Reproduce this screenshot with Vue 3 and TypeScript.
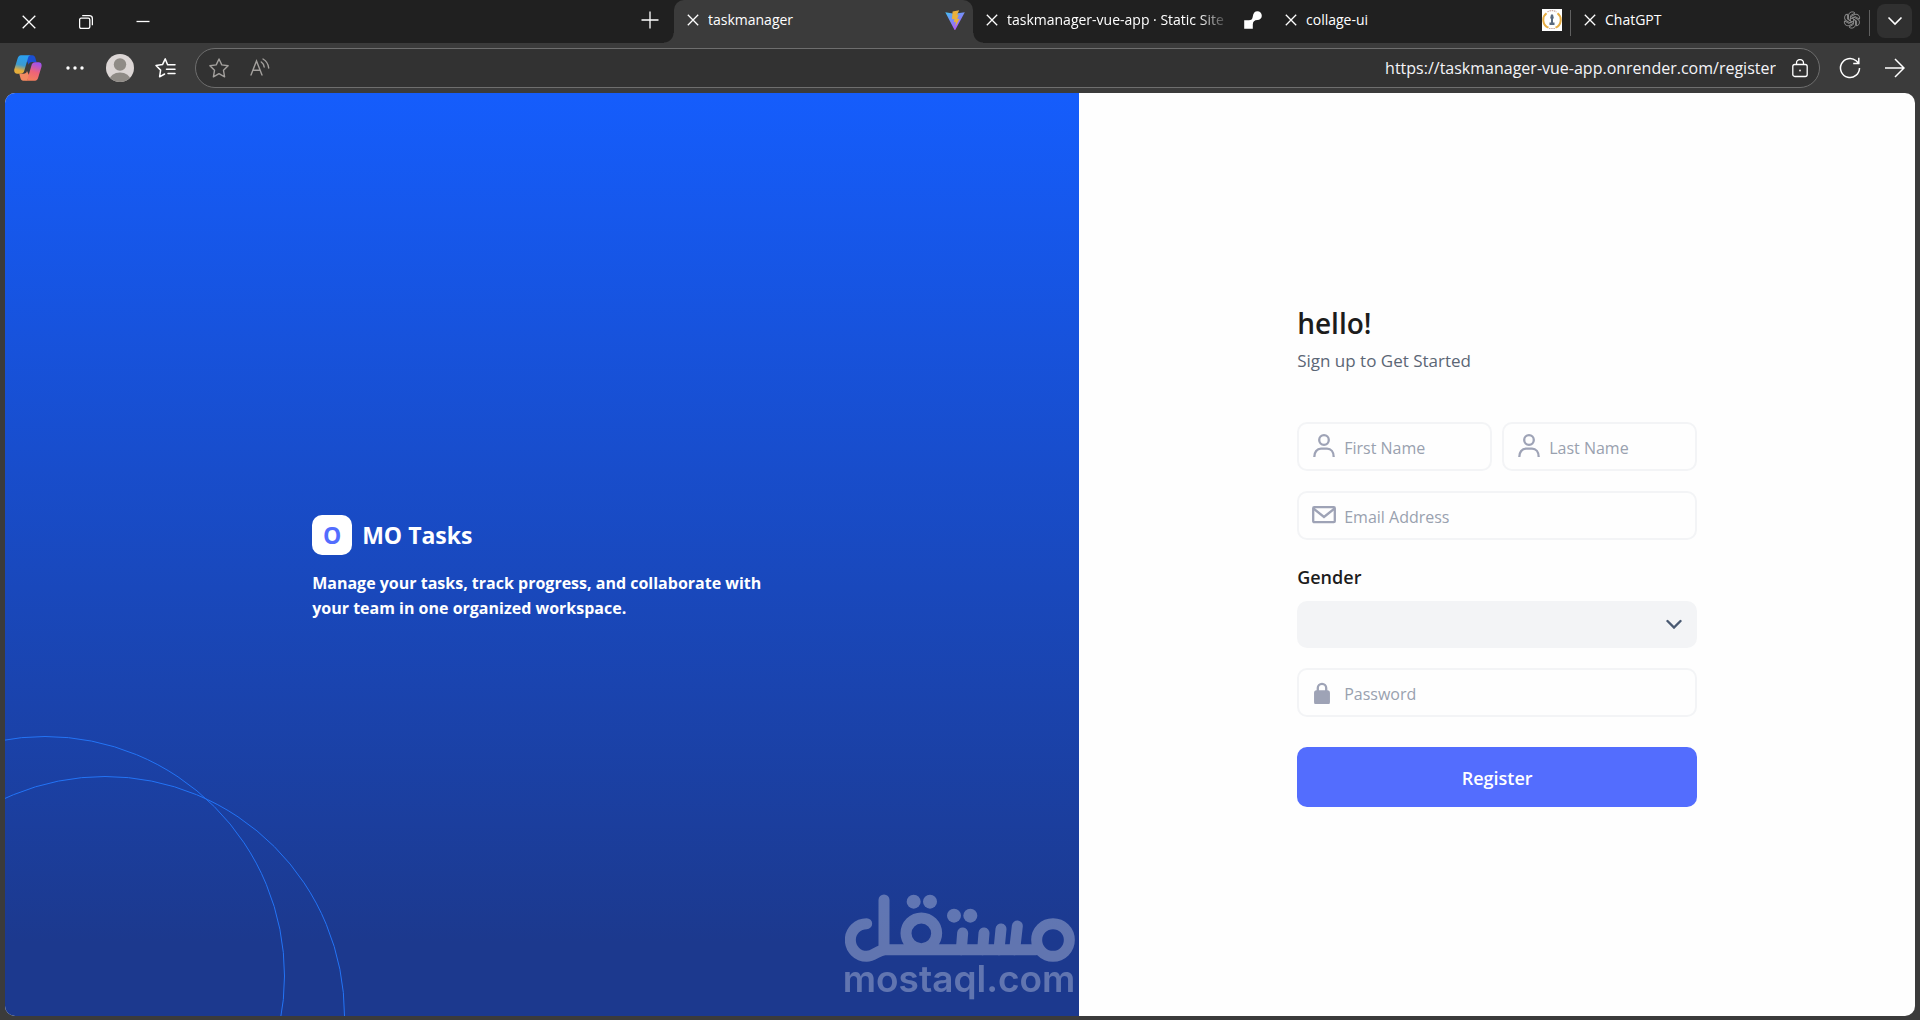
<script setup lang="ts">
import { ref } from 'vue'

interface Tab {
  title: string
  icon: 'vite' | 'render' | 'college' | 'openai'
  active?: boolean
}

const tabs: Tab[] = [
  { title: 'taskmanager', icon: 'vite', active: true },
  { title: 'taskmanager-vue-app · Static Site', icon: 'render' },
  { title: 'collage-ui', icon: 'college' },
  { title: 'ChatGPT', icon: 'openai' },
]

const petals = [0, 60, 120, 180, 240, 300]

const firstName = ref('')
const lastName = ref('')
const email = ref('')
const gender = ref('')
const password = ref('')
</script>

<template>
  <div class="browser">
    <header class="tabbar">
      <div class="window-controls">
        <button type="button" aria-label="Close window">
          <svg width="14" height="14" viewBox="0 0 14 14" class="line"><path d="M.7.7l12.6 12.6M13.3.7L.7 13.3" /></svg>
        </button>
        <button type="button" aria-label="Restore window">
          <svg width="14" height="14" viewBox="0 0 14 14" class="line">
            <rect x=".6" y="3.2" width="10.2" height="10.2" rx="1.6" />
            <path d="M3.2.7h7.2a3 3 0 0 1 3 3v6.600" />
          </svg>
        </button>
        <button type="button" aria-label="Minimize window">
          <svg width="14" height="14" viewBox="0 0 14 14" class="line"><path d="M.5 6.500h13" /></svg>
        </button>
      </div>
      <button type="button" class="new-tab" aria-label="New tab">
        <svg width="18" height="18" viewBox="0 0 18 18" class="line"><path d="M9 .5v17M.5 9h17" /></svg>
      </button>
      <nav class="tabs">
        <div v-for="tab in tabs" :key="tab.title" class="tab" :class="[tab.icon, { active: tab.active }]">
          <button type="button" class="tab-close" :aria-label="'Close ' + tab.title">
            <svg width="12" height="12" viewBox="0 0 12 12" class="line"><path d="M.8.8l10.400 10.400M11.200.8L.8 11.200" /></svg>
          </button>
          <span class="tab-title">{{ tab.title }}</span>
          <svg v-if="tab.icon === 'vite'" width="20" height="20" viewBox="0 0 20 20">
            <defs>
              <linearGradient id="vite-a" x1="0" y1="0" x2=".6" y2="1">
                <stop offset="0" stop-color="#41c0f5" />
                <stop offset="1" stop-color="#b455fb" />
              </linearGradient>
            </defs>
            <path d="M.3 2.200l9.100 1.600 10.400-1.600-9.300 17.200a.7.7 0 0 1-1.200 0z" fill="url(#vite-a)" />
            <path d="M14.200.2L7.600 1.500l-.6 7.800 2.400-.4-.6 3.400 2-.5-.4 4.700 4.200-7.800-2.300.4L13.600 4.700l-1.600.3z" fill="#e9b13b" />
          </svg>
          <svg v-else-if="tab.icon === 'render'" width="18" height="18" viewBox="0 0 18 18" fill="#fff">
            <path d="M.2 9.200h4.600c2.600 0 3.600-1.200 4-3.800C9.200 2.200 10.900.3 13.400.3a4.400 4.400 0 0 1 0 8.800c-2.900 0-4.600 1.700-4.600 4.400v4.200H.2z" />
          </svg>
          <svg v-else-if="tab.icon === 'college'" width="20" height="22" viewBox="0 0 20 22">
            <rect width="20" height="22" fill="#fff" />
            <path d="M4.500 4.200a8.500 8.500 0 0 0 2 14.500M15.500 4.200a8.500 8.500 0 0 1-2 14.500" fill="none" stroke="#e6ad45" stroke-width="2" />
            <path d="M5.500 3a8 8 0 0 1 9 0M7 19.500h6" fill="none" stroke="#c9a9a0" stroke-width="1.200" stroke-dasharray="1.500 .7" />
            <path d="M9 5.500h2l.8 3.500-.8 1v3.500h1.500v2.500h-5v-2.500H9V10l-.8-1z" fill="#59697e" />
          </svg>
          <svg v-else width="18" height="18" viewBox="-9 -9 18 18" fill="none" stroke="#858585" stroke-width="1">
            <path
              v-for="angle in petals"
              :key="angle"
              :transform="`rotate(${angle})`"
              d="M-3.500-5A3.800 3.800 0 0 1 3-7M-3.500-5V-.2L0 2M3-7L-1.300-4.500V-.8"
              stroke-linejoin="round"
            />
          </svg>
        </div>
      </nav>
      <button type="button" class="tab-menu" aria-label="Tab actions">
        <svg width="16" height="10" viewBox="0 0 16 10" class="line"><path d="M1.500 1.500L8 8l6.500-6.500" stroke-width="1.600" /></svg>
      </button>
    </header>

    <div class="toolbar">
      <button type="button" class="copilot" aria-label="Copilot">
        <svg width="28" height="26" viewBox="0 0 28 26">
          <defs>
            <linearGradient id="cp-left" x1=".4" y1="0" x2=".2" y2="1">
              <stop offset="0" stop-color="#2aa0f2" />
              <stop offset=".5" stop-color="#3b9bd0" />
              <stop offset=".8" stop-color="#e5ad3b" />
            </linearGradient>
            <linearGradient id="cp-right" x1=".6" y1="0" x2=".3" y2="1">
              <stop offset="0" stop-color="#a052ee" />
              <stop offset=".5" stop-color="#ef6378" />
              <stop offset="1" stop-color="#f3805a" />
            </linearGradient>
          </defs>
          <path d="M15 .3h3.500c1.500 0 2.300 1 2.800 2.500l1.200 4.200h-4.300c-2 0-3 1-3.500 2.800L12 4z" fill="#1b4fd2" />
          <path d="M7 .3h10c-1.700 0-2.500 1-3 2.700L10.500 15c-.7 2.500-1.500 3.700-4 3.700H3.300C.7 18.700-.3 16.700.4 14L3.500 3.700C4.200 1.500 5.200.3 7 .3z" fill="url(#cp-left)" />
          <path d="M12.500 25.700H9.200c-1.500 0-2.200-1-2.700-2.500l-1.200-4.500h4.200c2 0 3-1 3.500-2.800l2.700 5.600z" fill="#f28a62" />
          <path d="M21 25.700H10.800c1.700 0 2.500-1 3-2.700L17.300 11c.7-2.500 1.500-3.700 4-3.700h3.200c2.600 0 3.600 2 2.900 4.700l-3.100 10.300c-.6 2.200-1.600 3.400-3.300 3.400z" fill="url(#cp-right)" />
        </svg>
      </button>
      <button type="button" class="more" aria-label="Settings and more">
        <svg width="18" height="4" viewBox="0 0 18 4" fill="#fff"><circle cx="2" cy="2" r="1.700" /><circle cx="9" cy="2" r="1.700" /><circle cx="16" cy="2" r="1.700" /></svg>
      </button>
      <button type="button" class="profile" aria-label="Profile">
        <svg width="28" height="28" viewBox="0 0 28 28">
          <defs><clipPath id="avatar-clip"><circle cx="14" cy="14" r="14" /></clipPath></defs>
          <g clip-path="url(#avatar-clip)">
            <rect width="28" height="28" fill="#dcd6d5" />
            <circle cx="14" cy="10.500" r="6.200" fill="#8f8b86" />
            <ellipse cx="14" cy="26" rx="10.500" ry="7.600" fill="#8f8b86" />
          </g>
        </svg>
      </button>
      <button type="button" class="favorites" aria-label="Favorites">
        <svg width="22" height="20" viewBox="0 0 22 20" class="line" stroke-linejoin="round" stroke-linecap="round">
          <path d="M12.500 6.500L10.200.9 7.500 6.600 1 7.500l4.600 4.600-1 6.700 5-2.800M12.500 6.800H20M11.500 11.200H20M13 15.500H20" stroke-width="1.500" />
        </svg>
      </button>
      <div class="address">
        <div class="address-tools">
          <button type="button" aria-label="Add to favorites">
            <svg width="20" height="20" viewBox="0 0 20 20" class="line dim" stroke-linejoin="round">
              <path d="M10 1l2.800 5.900 6.300.9-4.600 4.500 1.100 6.500L10 15.700l-5.600 3.100 1.100-6.500L.9 7.800l6.300-.9z" stroke-width="1.400" />
            </svg>
          </button>
          <button type="button" aria-label="Read aloud">
            <svg width="20" height="20" viewBox="0 0 20 20" class="line dim" stroke-linecap="round">
              <path d="M1 17L6.500 3 12 17M3 12.200h7M11.300 4c1.700 1.200 2.700 2.900 2.900 5M13 1c3.300 1.900 5.300 5 5.700 9" stroke-width="1.400" />
            </svg>
          </button>
        </div>
        <input class="url" type="text" aria-label="Address" value="https://taskmanager-vue-app.onrender.com/register" />
        <button type="button" aria-label="Site information">
          <svg width="16" height="19" viewBox="0 0 16 19" class="line">
            <rect x=".8" y="5.500" width="14.400" height="12" rx="2" stroke-width="1.300" />
            <path d="M4.500 5.500V4a3.500 3.500 0 0 1 7 0v1.500" stroke-width="1.300" />
            <circle cx="8" cy="11.500" r="1" fill="#e6e0e0" stroke="none" />
          </svg>
        </button>
      </div>
      <button type="button" class="refresh" aria-label="Refresh">
        <svg width="22" height="22" viewBox="0 0 22 22" class="line"><path d="M20.500 11a9.500 9.500 0 1 1-3.300-7.200l2.300 2.300M19.800.8v5.600h-5.600" stroke-width="1.500" /></svg>
      </button>
      <button type="button" class="forward" aria-label="Forward">
        <svg width="20" height="20" viewBox="0 0 20 20" class="line"><path d="M0 10h19M10 1l9 9-9 9" stroke-width="1.500" /></svg>
      </button>
    </div>

    <main class="page">
      <section class="hero">
        <span class="ring ring-back"></span>
        <span class="ring ring-front"></span>
        <div class="intro">
          <div class="brand">
            <span class="brand-mark">O</span>
            <span class="brand-name">MO Tasks</span>
          </div>
          <p class="tagline">Manage your tasks, track progress, and collaborate with your team in one organized workspace.</p>
        </div>
        <div class="watermark">
          <svg width="230" height="68" viewBox="75 71 690 204" role="img" aria-label="مستقل">
            <g fill="none" stroke="#fff" stroke-width="33" stroke-linecap="round">
              <path d="M140 160A49 49 0 0 0 140 258C162 258 174 238 196 238H648" />
              <path d="M192 89V236" />
              <circle cx="304" cy="189" r="46" />
              <path d="M428 188l-4 50M492 188l-4 50M543 176l-6 62M592 167l-8 71" />
              <circle cx="699" cy="209" r="49" />
            </g>
            <g fill="#fff">
              <circle cx="281" cy="94" r="21" />
              <circle cx="330" cy="94" r="21" />
              <circle cx="402" cy="136" r="21" />
              <circle cx="451" cy="136" r="21" />
            </g>
          </svg>
          <span>mostaql.com</span>
        </div>
      </section>

      <section class="signup">
        <form class="form" @submit.prevent>
          <h1>hello!</h1>
          <p class="subtitle">Sign up to Get Started</p>

          <div class="name-row">
            <label class="field">
              <svg class="field-icon" viewBox="0 0 24 24">
                <circle cx="12" cy="6" r="4.800" />
                <path d="M2.300 23C2.300 18 5 14.700 9 14.700h6c4 0 6.700 3.300 6.700 8.300" />
              </svg>
              <input v-model="firstName" type="text" placeholder="First Name" aria-label="First Name" />
            </label>
            <label class="field">
              <svg class="field-icon" viewBox="0 0 24 24">
                <circle cx="12" cy="6" r="4.800" />
                <path d="M2.300 23C2.300 18 5 14.700 9 14.700h6c4 0 6.700 3.300 6.700 8.300" />
              </svg>
              <input v-model="lastName" type="text" placeholder="Last Name" aria-label="Last Name" />
            </label>
          </div>

          <label class="field">
            <svg class="field-icon" viewBox="0 0 24 24">
              <rect x="1.200" y="4.200" width="21.600" height="15" rx="1" />
              <path d="M1.500 5.500l10.500 8.500L22.500 5.500" />
            </svg>
            <input v-model="email" type="email" placeholder="Email Address" aria-label="Email Address" />
          </label>

          <div class="gender">
            <label for="gender">Gender</label>
            <div class="select-box">
              <select id="gender" v-model="gender">
                <option value=""></option>
                <option value="male">Male</option>
                <option value="female">Female</option>
              </select>
              <svg width="16" height="10" viewBox="0 0 16 10"><path d="M1.500 2L8 8.500 14.500 2" fill="none" stroke="#4a5a72" stroke-width="2.400" stroke-linecap="round" /></svg>
            </div>
          </div>

          <label class="field">
            <svg class="field-icon" viewBox="0 0 24 24">
              <rect x="3.200" y="11.500" width="13.600" height="12" rx="1.500" class="solid" />
              <path d="M5.800 11.500V8a4.200 4.200 0 0 1 8.400 0v3.500" />
            </svg>
            <input v-model="password" type="password" placeholder="Password" aria-label="Password" />
          </label>

          <button type="submit" class="submit">Register</button>
        </form>
      </section>
    </main>
  </div>
</template>

<style>
body {
  margin: 0;
  background: #3b3b3b;
}
</style>

<style scoped>
.browser {
  display: flex;
  flex-direction: column;
  min-height: 100vh;
  background: #3b3b3b;
  font-family: "Open Sans", "Noto Sans", sans-serif;
  font-size: 16px;
}

.browser *,
.browser {
  box-sizing: border-box;
}

button {
  display: flex;
  align-items: center;
  justify-content: center;
  flex: none;
  padding: 0;
  border: 0;
  background: none;
  font: inherit;
  color: inherit;
}

svg {
  display: block;
  flex: none;
}

.line {
  fill: none;
  stroke: #fff;
  stroke-width: 1.300;
}

.line.dim {
  stroke: #a3a09d;
}

.tabbar {
  display: flex;
  height: 43px;
  background: #202020;
  color: #fff;
}

.window-controls {
  display: flex;
}

.window-controls button {
  width: 57px;
  height: 43px;
}

.new-tab {
  width: 48px;
  height: 39px;
  margin-left: auto;
}

.tabs {
  display: flex;
}

.tab {
  position: relative;
  display: flex;
  align-items: center;
  gap: 9px;
  width: 299px;
  height: 43px;
  padding: 0 8px 4px 13px;
  font-size: 14px;
}

.tab.active {
  border-radius: 10px 10px 0 0;
  background: #3b3b3b;
}

.tab.active::before,
.tab.active::after {
  content: "";
  position: absolute;
  bottom: 0;
  width: 10px;
  height: 10px;
}

.tab.active::before {
  right: 100%;
  background: radial-gradient(circle at 0 0, transparent 9px, #3b3b3b 10px);
}

.tab.active::after {
  left: 100%;
  background: radial-gradient(circle at 100% 0, transparent 9px, #3b3b3b 10px);
}

.tab.render {
  padding-right: 10px;
}

.tab.college,
.tab.openai {
  border-right: 1px solid #606060;
  border-image: linear-gradient(transparent 11px, #606060 11px, #606060 35px, transparent 35px) 1;
}

.tab-title {
  flex: 1;
  overflow: hidden;
  white-space: nowrap;
}

.tab.render .tab-title {
  mask-image: linear-gradient(90deg, #000 84%, transparent 98%);
}

.tab-menu {
  width: 35px;
  height: 34px;
  margin: 4px 8px 0 7px;
  border-radius: 8px;
  background: #303030;
}

.toolbar {
  display: flex;
  align-items: center;
  height: 50px;
  padding: 0 15px 0 14px;
}

.more {
  margin-left: 24px;
}

.profile {
  margin-left: 22px;
}

.favorites {
  margin-left: 21px;
}

.address {
  display: flex;
  flex: 1;
  align-items: center;
  gap: 16px;
  height: 40px;
  margin: 0 19px 0 18px;
  padding: 0 11px 0 13px;
  border: 1px solid #6e6e6e;
  border-radius: 20px;
  background: #323232;
}

.address-tools {
  display: flex;
  gap: 21px;
}

.url {
  flex: 1;
  min-width: 0;
  padding: 0;
  border: 0;
  outline: 0;
  background: none;
  color: #f4f4f8;
  font: inherit;
  text-align: right;
}

.forward {
  margin-left: 24px;
}

.page {
  display: flex;
  flex: 1;
  margin: 0 5px 4px;
  overflow: hidden;
  border-radius: 10px;
  background: #fefefe;
}

.hero {
  position: relative;
  display: flex;
  flex: 9 1 0;
  align-items: center;
  justify-content: center;
  overflow: hidden;
  background: linear-gradient(#155dfc, #1c398e 92%);
  color: #fff;
}

.ring {
  position: absolute;
  width: 480px;
  height: 480px;
  border: 1px solid #2374f6;
  border-radius: 50%;
}

.ring-back {
  bottom: -200px;
  left: -200px;
}

.ring-front {
  bottom: -240px;
  left: -140px;
}

.intro {
  width: 460px;
  padding-top: 26px;
}

.brand {
  display: flex;
  align-items: center;
  gap: 10px;
}

.brand-mark {
  width: 40px;
  border-radius: 10px;
  background: #fff;
  color: #536dfe;
  font-size: 23px;
  font-weight: 700;
  line-height: 40px;
  text-align: center;
}

.brand-name {
  font-size: 23px;
  font-weight: 700;
  line-height: 40px;
}

.tagline {
  margin: 16px 0 0;
  font-size: 16px;
  font-weight: 700;
  line-height: 25px;
}

.watermark {
  position: absolute;
  right: 4px;
  bottom: 20px;
  display: flex;
  flex-direction: column;
  align-items: flex-end;
  opacity: 0.3;
  font-family: Inter, "Open Sans", sans-serif;
  font-size: 37px;
  font-weight: 600;
  line-height: 34px;
}

.signup {
  display: flex;
  flex: 7 1 0;
  align-items: center;
  justify-content: center;
}

.form {
  display: flex;
  flex-direction: column;
  gap: 20px;
  width: 400px;
  color: #1c1c1c;
}

h1 {
  margin: 0;
  font-size: 28px;
  font-weight: 600;
  line-height: 40px;
}

.subtitle {
  margin: -18px 0 25px;
  color: #5b6675;
  font-size: 17px;
  line-height: 32px;
}

.name-row {
  display: flex;
  gap: 10px;
}

.field {
  display: flex;
  flex: 1 1 auto;
  align-items: center;
  gap: 8px;
  min-width: 0;
  height: 49px;
  padding: 0 13px;
  border: 2px solid #f3f4f6;
  border-radius: 10px;
}

.field-icon {
  width: 24px;
  height: 24px;
  fill: none;
  stroke: #9ea3b6;
  stroke-width: 2.300;
}

.solid {
  fill: #9ea3b6;
}

.field input {
  flex: 1;
  min-width: 0;
  padding: 3px 0 0;
  border: 0;
  outline: 0;
  background: none;
  font: inherit;
}

.field input::placeholder {
  color: #99a1af;
  opacity: 1;
}

.gender {
  display: flex;
  flex-direction: column;
  gap: 9px;
  padding-top: 3px;
}

.gender label {
  font-size: 18px;
  font-weight: 600;
  line-height: 29px;
}

.select-box {
  display: grid;
  align-items: center;
}

.select-box select,
.select-box svg {
  grid-area: 1 / 1;
}

.select-box select {
  width: 100%;
  height: 47px;
  padding: 0 12px;
  border: 0;
  border-radius: 10px;
  appearance: none;
  background: #f3f4f6;
  font: inherit;
}

.select-box svg {
  justify-self: end;
  margin-right: 15px;
  pointer-events: none;
}

.submit {
  height: 60px;
  margin-top: 10px;
  padding-top: 2px;
  border-radius: 10px;
  background: #536dfe;
  color: #fff;
  font-size: 18px;
  font-weight: 600;
}
</style>
